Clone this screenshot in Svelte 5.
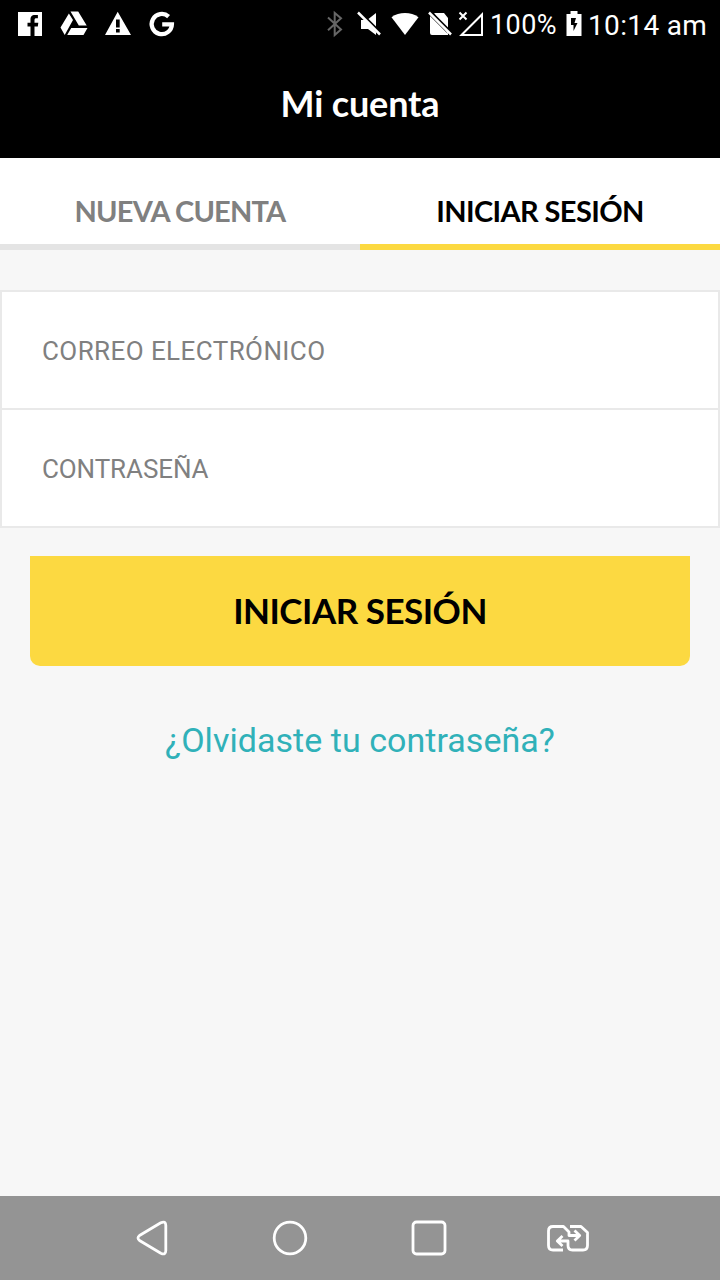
<script>
  let tab = $state('login');
  const fields = [
    { type: 'email', label: 'CORREO ELECTRÓNICO' },
    { type: 'password', label: 'CONTRASEÑA' }
  ];
</script>

<div class="screen">
  <div class="status">
    <svg width="200" height="50" viewBox="0 0 200 50" fill="#fff">
      <path d="M18 12h24v24h-7.500v-9.500h3.300l.5-3.800h-3.800v-2.500c0-1.300.5-1.900 1.900-1.900h1.500V15h-3c-3.300 0-4.400 1.800-4.400 4.700v3h-3v3.800h3V36H18z" />
      <path d="M70.500 11.500h7.700l8.500 14h-7.900zM68.900 13.400l4.100 6.700-8.300 14.800-4.200-7.400zM71.200 28h16.300l-4 7H67.200z" />
      <path fill-rule="evenodd" d="M117.700 11.800 131 35h-26zM116 19.500v8h3.700v-8zm0 9.500v3.500h3.700V29z" />
      <path d="M168.600 16.600A10.100 10.100 0 1 0 171.900 24.300H162.200" fill="none" stroke="#fff" stroke-width="4.300" />
    </svg>
    <div class="info">
      <svg width="166" height="50" viewBox="324 0 166 50" fill="#fff">
        <path d="m328 17.500 13 12-6.300 5.500V13l6.300 5.300-13 12" fill="none" stroke="#666" stroke-width="2" />
        <path d="M376 13v18.500l-9.500-11zM361 20h4.500l10.500 12v3l-8-6h-7z" />
        <path d="m359.500 12 21.500 21.500" fill="none" stroke="#000" stroke-width="3" />
        <path d="m358 12.500 22 22" fill="none" stroke="#fff" stroke-width="2.500" />
        <path d="M391.500 17.200c7.700-5.500 19.300-5.500 27 0L405 35z" />
        <path d="M434 13h10l4 5v16zM430 16l18 18v1h-16q-2 0-2-2z" />
        <path d="m430.500 12 21.500 21.500" fill="none" stroke="#000" stroke-width="3" />
        <path d="m429 12.500 22 22" fill="none" stroke="#fff" stroke-width="2.500" />
        <path d="m459.500 12.500 7 7m0-7-7 7M461.500 35 482 14.500V35z" fill="none" stroke="#fff" stroke-width="2" />
      </svg>
      <span class="percent">100%</span>
      <svg class="battery" width="16" height="50" viewBox="0 0 16 50">
        <path fill="#fff" fill-rule="evenodd" d="M4.500 11h7v3h4v22H.5V14h4zM5 18v7h2.500v6l4-8H8.500l1.500-5z" />
      </svg>
      <span class="clock">10:14 am</span>
    </div>
  </div>

  <header><h1>Mi cuenta</h1></header>

  <nav class="tabs">
    <button class:active={tab === 'new'} onclick={() => (tab = 'new')}>NUEVA CUENTA</button>
    <button class:active={tab === 'login'} onclick={() => (tab = 'login')}>INICIAR SESIÓN</button>
  </nav>

  <main>
    <form onsubmit={(e) => e.preventDefault()}>
      <div class="fields">
        {#each fields as f}
          <label class="field"><input type={f.type} placeholder={f.label} /></label>
        {/each}
      </div>
      <button class="submit">INICIAR SESIÓN</button>
    </form>
    <a href="#recuperar">¿Olvidaste tu contraseña?</a>
  </main>

  <footer>
    <svg width="720" height="84" viewBox="0 1196 720 84" fill="none" stroke="#fff" stroke-width="2.800" stroke-linejoin="round">
      <path d="M139.500 1235.500 160.800 1222.800Q165.800 1220.500 165.800 1225.500V1250.500Q165.800 1255.500 160.800 1253.200L139.500 1240.500Q136.500 1238 139.500 1235.500Z" />
      <circle cx="290" cy="1238" r="15.800" />
      <rect x="413" y="1222" width="32" height="32" rx="3.500" />
      <path d="M563 1250h-10q-4.500 0-4.500-4.500v-14.500q0-4.500 4.500-4.500h10.500l5.500 5.500v3.500h9M574.500 1230.500l5.200 5-5.200 5M570 1226.500h11l6.500 6v13q0 4.500-4.500 4.500h-10.500q-4.500 0-4.500-4.500v-4.500h-10M562.500 1236l-5.200 5 5.200 5" />
    </svg>
  </footer>
</div>

<style>
  :global(body) { margin: 0; }
  * { box-sizing: border-box; }
  .screen { width: 720px; height: 1280px; display: flex; flex-direction: column; background: #f7f7f7; font-family: Roboto, sans-serif; overflow: hidden; }
  .status { height: 50px; background: #000; color: #fff; display: flex; justify-content: space-between; padding-right: 12px; }
  svg { display: block; flex: none; }
  .info { display: flex; white-space: nowrap; line-height: 51px; font-size: 28px; }
  .percent { width: 76px; font-size: 27px; letter-spacing: 0.4px; }
  .battery { margin-right: 6px; }
  .clock { width: 120px; letter-spacing: 0.35px; }
  header { height: 108px; background: #000; color: #fff; display: flex; align-items: center; justify-content: center; }
  h1 { margin: 0 0 2px; font: bold 36px/106px Lato, sans-serif; letter-spacing: -0.15px; }
  button { border: 0; margin: 0; padding: 0; background: none; cursor: pointer; font-family: Lato, sans-serif; font-weight: bold; }
  .tabs { height: 92px; display: grid; grid-template-columns: 1fr 1fr; background: #fff; }
  .tabs button { border-bottom: 6px solid #e4e4e4; color: #808080; font-size: 29px; line-height: 36px; padding-top: 20px; letter-spacing: -0.8px; }
  .tabs button.active { border-color: #fcd941; color: #000; letter-spacing: -0.6px; }
  main { flex: 1; padding-top: 40px; display: flex; flex-direction: column; }
  .fields { border: 2px solid #e9e9e9; background: #fff; }
  .field { display: flex; height: 116px; }
  .field + .field { border-top: 2px solid #e9e9e9; height: 118px; }
  input { flex: 1; border: 0; outline: 0; background: none; padding: 2px 40px 0; font: 26px Roboto, sans-serif; letter-spacing: 0.42px; }
  input[type='password'] { letter-spacing: -0.1px; }
  input::placeholder { color: #808080; opacity: 1; }
  .submit { display: block; width: 660px; height: 110px; margin: 28px 30px 0; padding-bottom: 2px; background: #fcd941; color: #000; border-radius: 0 0 10px 10px; font-size: 35px; letter-spacing: -0.5px; }
  a { align-self: center; margin-top: 49px; line-height: 50px; font-size: 34px; letter-spacing: 0.04px; color: #30b1b9; text-decoration: none; white-space: nowrap; }
  footer { height: 84px; background: #949494; }
</style>
